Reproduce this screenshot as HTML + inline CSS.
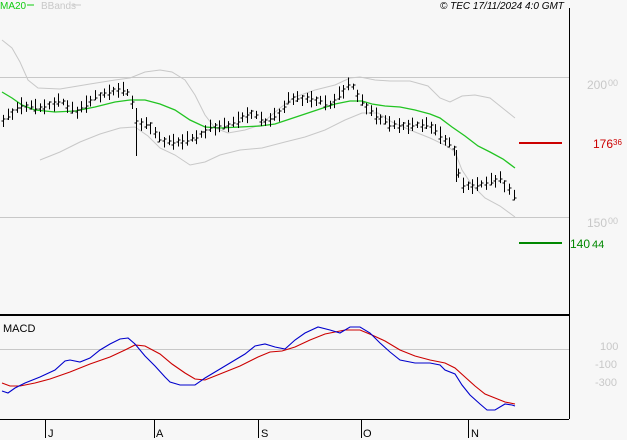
<!DOCTYPE html>
<html><head><style>
html,body{margin:0;padding:0;background:#f7f7f7;width:627px;height:440px;overflow:hidden}
svg{display:block;font-family:"Liberation Sans",sans-serif}
</style></head><body>
<svg id="s" width="627" height="440" viewBox="0 0 627 440" xmlns="http://www.w3.org/2000/svg">
<rect width="627" height="440" fill="#f7f7f7"/>
<line x1="0" y1="77.5" x2="569" y2="77.5" stroke="#c8c8c8"/>
<line x1="0" y1="217.5" x2="569" y2="217.5" stroke="#c8c8c8"/>
<line x1="0" y1="349.5" x2="569" y2="349.5" stroke="#c8c8c8"/>
<polyline fill="none" stroke="#c8c8c8" points="2,40 12,48 20,62 28,80 38,88 60,89 90,84 115,80 130,78 145,72 160,70 172,72 185,80 195,95 205,115 215,128 228,133 245,130 260,125 280,108 295,97 315,90 335,85 350,78 360,77 375,80 390,81 410,81 428,86 440,98 450,102 462,96 475,95 490,98 505,110 515,118"/>
<polyline fill="none" stroke="#c8c8c8" points="40,160 60,152 80,142 100,134 120,128 135,127 148,136 160,148 175,155 190,165 205,162 220,155 240,150 262,148 285,142 305,137 325,130 345,120 362,113 378,113 392,122 410,130 430,138 447,146 455,152 462,170 472,185 485,198 500,206 515,217"/>
<polyline fill="none" stroke="#22c422" stroke-width="1.3" points="2,92 12,98 22,105 35,110 55,112 75,111 95,107 115,102 130,100 145,100 160,104 175,110 190,120 205,127 220,128 240,127 260,126 275,124 290,119 305,114 320,109 335,104 350,101 362,101 372,104 385,106 400,107 415,110 430,114 440,118 452,127 465,136 478,146 490,152 503,159 515,168"/>
<g id="bars" stroke="#000" stroke-width="1"></g>
<g stroke="#000"><line x1="136.5" y1="108" x2="136.5" y2="156"/><line x1="456.5" y1="150" x2="456.5" y2="182"/></g>
<line x1="569.5" y1="8" x2="569.5" y2="419" stroke="#000"/>
<line x1="0" y1="315" x2="569" y2="315" stroke="#000" stroke-width="2"/>
<line x1="0" y1="419.5" x2="569" y2="419.5" stroke="#000"/>
<g stroke="#000"><line x1="45.5" y1="419" x2="45.5" y2="438"/><line x1="154.5" y1="419" x2="154.5" y2="438"/><line x1="258.5" y1="419" x2="258.5" y2="438"/><line x1="361.5" y1="419" x2="361.5" y2="438"/><line x1="468.5" y1="419" x2="468.5" y2="438"/></g>
<g font-size="11" fill="#000"><text x="48" y="437">J</text><text x="156" y="437">A</text><text x="261" y="437">S</text><text x="363" y="437">O</text><text x="471" y="437">N</text></g>
<polyline fill="none" stroke="#c00" stroke-width="1.1" points="2,383 10,386 20,386 35,383 50,379 70,372 90,364 110,357 125,350 135,345 145,346 160,354 172,364 185,373 195,379 205,380 220,374 240,366 258,357 270,352 282,351 295,347 310,340 325,334 345,330 360,330 372,335 385,341 400,350 415,356 430,360 445,363 455,368 465,377 475,386 485,394 495,398 505,402 515,404"/>
<polyline fill="none" stroke="#00c" stroke-width="1.1" points="2,391 8,393 15,388 25,383 40,377 55,370 65,361 70,360 80,362 90,358 100,350 110,344 120,339 128,338 135,344 145,356 155,366 165,377 170,382 180,385 195,385 205,378 215,372 230,363 245,354 255,346 265,344 275,347 285,349 295,340 305,333 318,327 330,330 340,333 350,327 360,327 370,333 380,343 390,352 400,360 415,363 430,363 440,365 445,370 455,374 462,385 470,395 480,404 487,410 495,410 505,404 512,405 515,406"/>
<text x="3" y="332" font-size="11" fill="#000">MACD</text>
<line x1="519" y1="143" x2="562" y2="143" stroke="#c00" stroke-width="2"/>
<line x1="519" y1="243" x2="562" y2="243" stroke="#080" stroke-width="2"/>
<g font-size="12"><text x="593" y="148" fill="#c00">176</text><text x="613" y="145" font-size="8" fill="#c00">36</text>
<text x="570" y="248" fill="#080">140</text><text x="592" y="248" font-size="11" fill="#080">44</text>
<text x="587" y="89" fill="#c8c8c8">200</text><text x="608" y="86" font-size="9" fill="#c8c8c8">00</text>
<text x="587" y="227" fill="#c8c8c8">150</text><text x="608" y="224" font-size="9" fill="#c8c8c8">00</text>
<text x="600" y="350" fill="#c8c8c8" font-size="11">100</text>
<text x="595" y="368" fill="#c8c8c8" font-size="11">-100</text>
<text x="595" y="386" fill="#c8c8c8" font-size="11">-300</text></g>
<text x="0" y="9" font-size="10" fill="#1c1" >MA20</text><line x1="27" y1="5" x2="34" y2="5" stroke="#1c1"/>
<text x="41" y="9" font-size="10" fill="#c8c8c8">BBands</text><line x1="73" y1="5" x2="81" y2="5" stroke="#c8c8c8"/>
<text x="440" y="9" font-size="10" font-style="italic" fill="#000">© TEC 17/11/2024 4:0 GMT</text>
</svg>
<script>
var k=[[3,120],[20,105],[40,108],[60,100],[75,112],[95,97],[120,88],[130,95],[137,122],[150,125],[160,140],[175,142],[195,138],[210,127],[230,125],[250,112],[265,122],[280,112],[290,98],[310,98],[330,105],[350,82],[360,100],[375,115],[390,125],[410,125],[430,125],[445,140],[455,150],[460,185],[480,185],[500,178],[510,190],[515,200]];
function f(x){for(var i=0;i<k.length-1;i++){if(x<=k[i+1][0]){var t=(x-k[i][0])/(k[i+1][0]-k[i][0]);return k[i][1]+t*(k[i+1][1]-k[i][1]);}}return 200;}
var g=document.getElementById('bars'),h='',n=0;
for(var x=3;x<=515;x+=4.6){n++;var c=f(x),r=((n*37)%11)/11;var hi=c-3-r*6,lo=c+3+((n*53)%7);var X=Math.round(x)+0.5;var cy=Math.round(c+(r-0.5)*4);
h+='<line x1="'+X+'" y1="'+hi+'" x2="'+X+'" y2="'+lo+'"/><line x1="'+(X-2)+'" y1="'+(cy+2)+'" x2="'+X+'" y2="'+(cy+2)+'"/><line x1="'+X+'" y1="'+cy+'" x2="'+(X+2)+'" y2="'+cy+'"/>';}
g.innerHTML=h;
</script>
</body></html>
